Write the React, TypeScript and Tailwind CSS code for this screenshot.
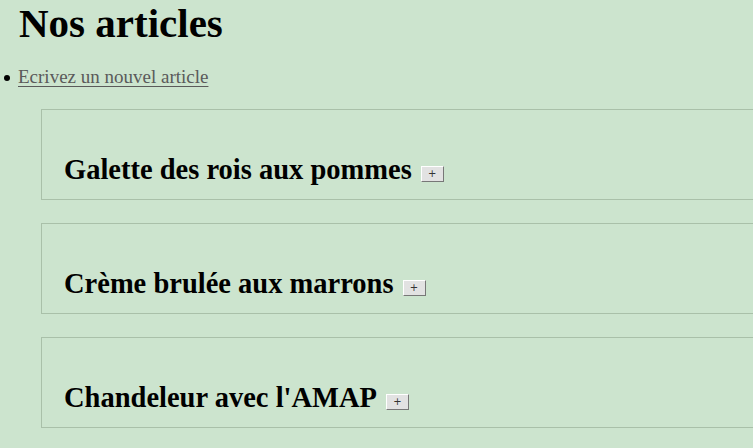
import React from 'react';

const articles = ['Galette des rois aux pommes', 'Crème brulée aux marrons', "Chandeleur avec l'AMAP"];

const App: React.FC = () => {
  return (
    <div className="h-[448px] w-[753px] overflow-hidden bg-[#cce4ce] font-['Liberation_Serif',serif] text-black">
      <h1 className="pl-[19px] pt-[1px] text-[41px] font-bold leading-[44px]">Nos articles</h1>
      <ul className="mt-[21px] pl-[4px]">
        <li className="flex items-center gap-[5px]">
          <span className="mt-[2px] h-[6px] w-[6px] rounded-full bg-black" />
          <a href="#" className="ml-[3px] text-[19px] leading-[22px] text-[#5a5a5a] underline decoration-[#5a5a5a] underline-offset-[3px]">
            Ecrivez un nouvel article
          </a>
        </li>
      </ul>
      <div className="mt-[21px] flex flex-col gap-[23px] pl-[41px]">
        {articles.map((title) => (
          <div key={title} className="h-[91px] w-[740px] border border-[#a9c0a9] px-[22px] pt-[43px]">
            <h2 className="flex items-center text-[28.5px] font-bold leading-[34px]">
              {title}
              <button className="ml-[9px] mt-[8px] flex h-[16px] w-[23px] items-center justify-center border border-t-white border-l-white border-r-[#777] border-b-[#777] bg-[#e2e2e2] font-['DejaVu_Sans',sans-serif] text-[10px] font-normal leading-none text-[#333]">
                +
              </button>
            </h2>
          </div>
        ))}
      </div>
    </div>
  );
};

export default App;
